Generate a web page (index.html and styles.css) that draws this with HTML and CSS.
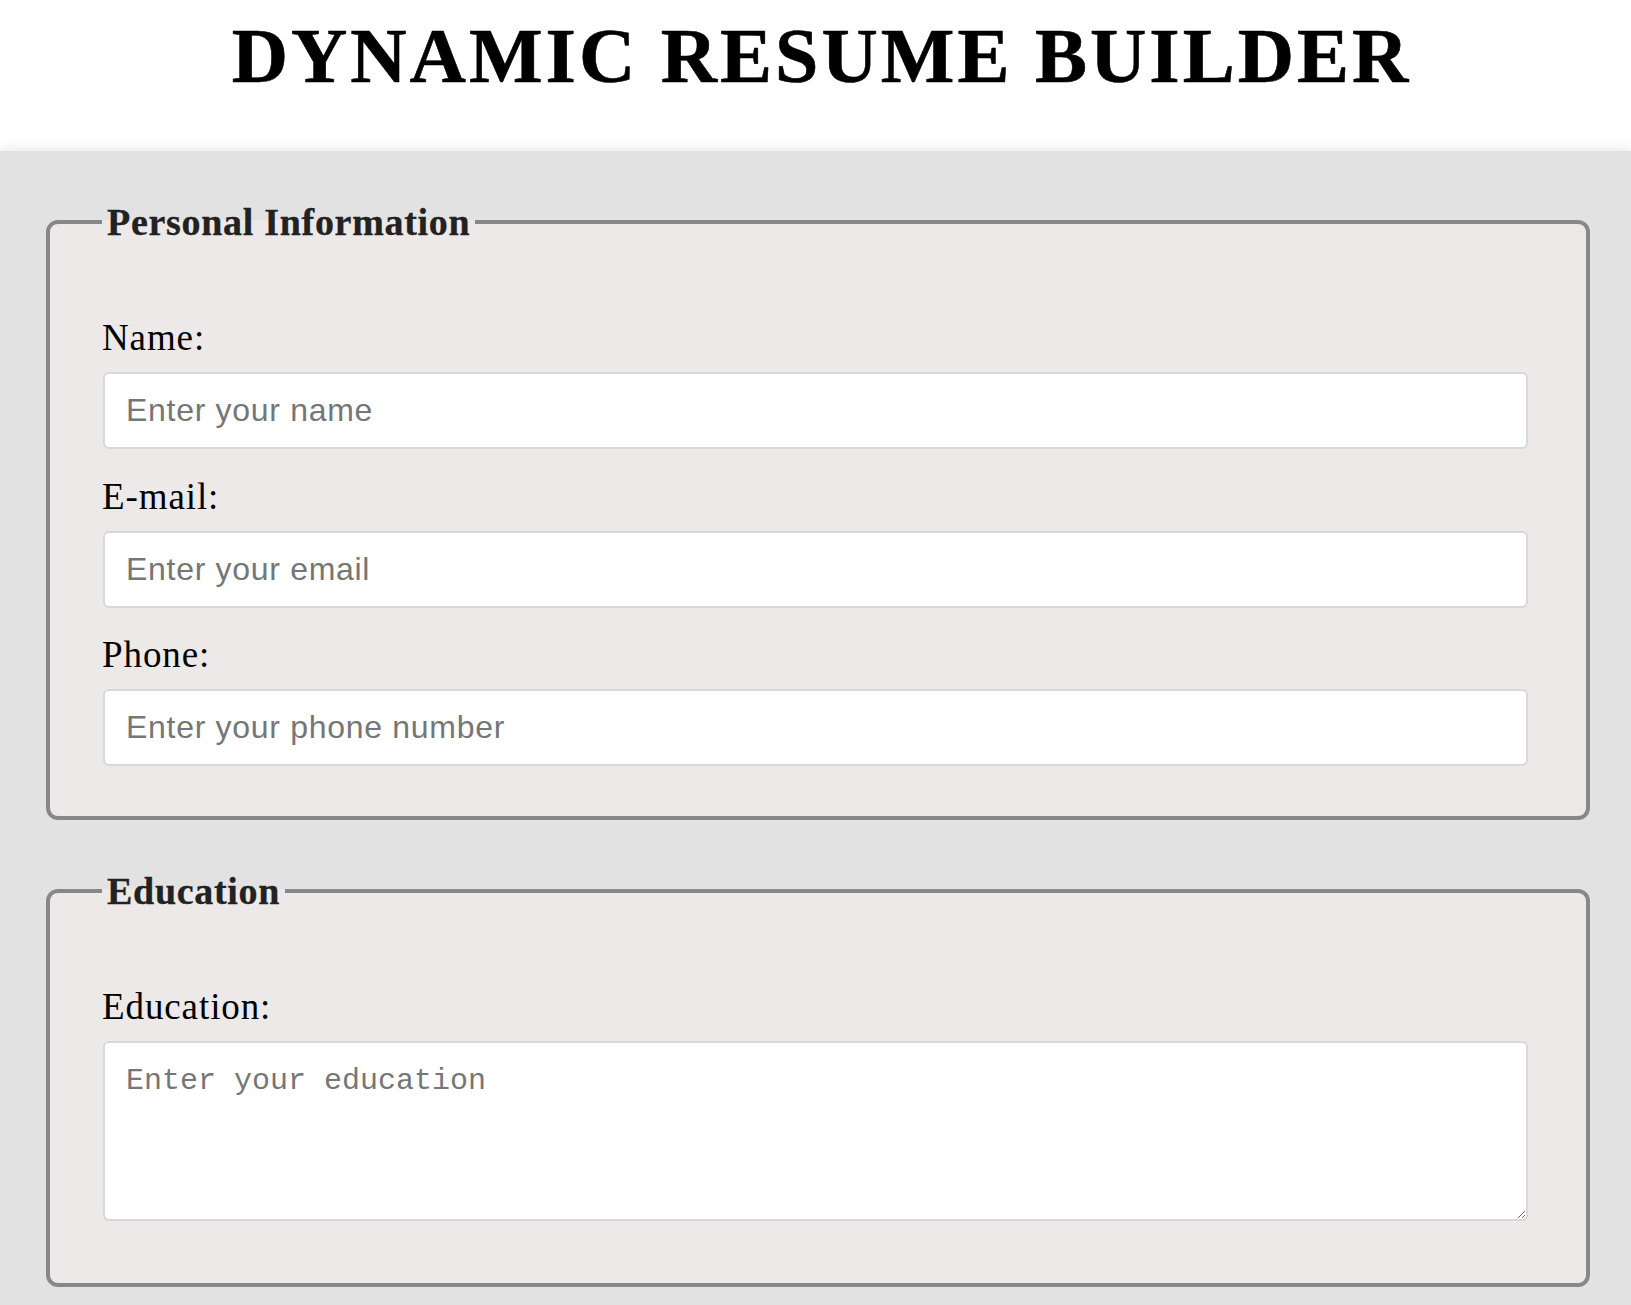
FILE: index.html
```html
<!DOCTYPE html>
<html lang="en">
<head>
<meta charset="utf-8">
<title>Dynamic Resume Builder</title>
<link rel="stylesheet" href="styles.css">
</head>
<body>
<header class="header">
  <h1 class="title">DYNAMIC RESUME BUILDER</h1>
</header>
<main class="main">
  <form class="form">
    <fieldset class="section">
      <legend class="section-title">Personal Information</legend>
      <div class="field">
        <label class="label" for="name">Name:</label>
        <input class="input" id="name" type="text" placeholder="Enter your name">
      </div>
      <div class="field">
        <label class="label" for="email">E-mail:</label>
        <input class="input" id="email" type="email" placeholder="Enter your email">
      </div>
      <div class="field">
        <label class="label" for="phone">Phone:</label>
        <input class="input" id="phone" type="tel" placeholder="Enter your phone number">
      </div>
    </fieldset>
    <fieldset class="section section-last">
      <legend class="section-title">Education</legend>
      <div class="field">
        <label class="label" for="education">Education:</label>
        <textarea class="textarea" id="education" placeholder="Enter your education"></textarea>
      </div>
    </fieldset>
  </form>
</main>
</body>
</html>
```
FILE: styles.css
```css
html {
  background: #e2e2e2;
}

body {
  margin: 0;
}

.header {
  box-sizing: border-box;
  height: 151px;
  padding: 13px 0 0 12px;
  background: #fff;
  text-align: center;
}

.title {
  margin: 0;
  font: bold 78px/86px "Liberation Serif", "Times New Roman", serif;
  letter-spacing: 3px;
  color: #000;
  -webkit-text-stroke: 0.6px #000;
}

.main {
  background: #e2e2e2;
  padding: 49px 41px 0 46px;
  box-shadow: 0 0 14px rgba(0, 0, 0, 0.12);
}

.form {
  margin: 0;
}

.section {
  margin: 0 0 49px;
  padding: 72px 58px 50px 52px;
  border: 4px solid #888888;
  border-radius: 12px;
  background: #ede9e8;
  min-width: 0;
}

.section-last {
  margin-bottom: 0;
}

.section-title {
  padding: 0 5px;
  font: bold 38px/44px "Liberation Serif", "Times New Roman", serif;
  letter-spacing: 0.7px;
  color: #222;
  -webkit-text-stroke: 0.3px #222;
}

.label {
  display: block;
  font: 37px/43px "Liberation Serif", "Times New Roman", serif;
  letter-spacing: 0.9px;
  color: #000;
}

.input {
  display: block;
  box-sizing: border-box;
  width: calc(100% - 1px);
  height: 77px;
  margin: 13px 0 25.5px 1px;
  padding: 0 21px;
  border: 2px solid #d8d8d8;
  border-radius: 6px;
  background: #fff;
  font: 32px "Liberation Sans", Arial, sans-serif;
  letter-spacing: 0.7px;
  color: #000;
  outline: none;
}

.field:last-child .input {
  margin-bottom: 0;
}

.textarea {
  display: block;
  box-sizing: border-box;
  width: calc(100% - 1px);
  height: 180px;
  margin: 13px 0 12px 1px;
  padding: 21px;
  border: 2px solid #d8d8d8;
  border-radius: 6px;
  background: #fff;
  font: 30px "Liberation Mono", "Courier New", monospace;
  color: #000;
  outline: none;
}

.input::placeholder,
.textarea::placeholder {
  color: #767676;
}
```
